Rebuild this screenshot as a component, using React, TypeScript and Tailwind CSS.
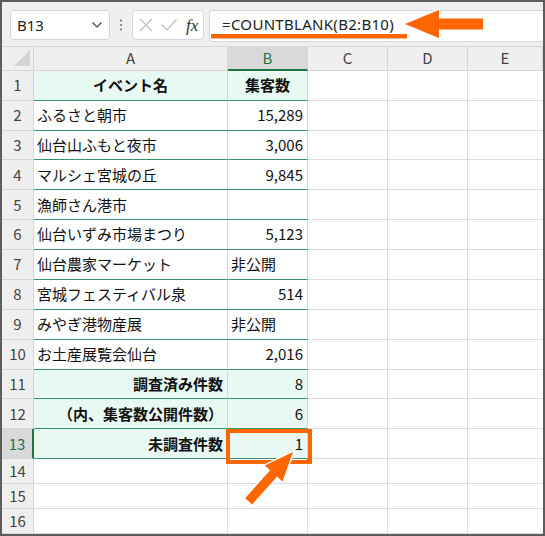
import React from 'react';

// ── Sheet data ────────────────────────────────────────────────────────────────
type Row = {
  n: number;
  a: string;
  b: string;
  kind?: 'head' | 'sum';
  bLeft?: boolean;
};

const ROWS: Row[] = [
  { n: 1, a: 'イベント名', b: '集客数', kind: 'head' },
  { n: 2, a: 'ふるさと朝市', b: '15,289' },
  { n: 3, a: '仙台山ふもと夜市', b: '3,006' },
  { n: 4, a: 'マルシェ宮城の丘', b: '9,845' },
  { n: 5, a: '漁師さん港市', b: '' },
  { n: 6, a: '仙台いずみ市場まつり', b: '5,123' },
  { n: 7, a: '仙台農家マーケット', b: '非公開', bLeft: true },
  { n: 8, a: '宮城フェスティバル泉', b: '514' },
  { n: 9, a: 'みやぎ港物産展', b: '非公開', bLeft: true },
  { n: 10, a: 'お土産展覧会仙台', b: '2,016' },
  { n: 11, a: '調査済み件数', b: '8', kind: 'sum' },
  { n: 12, a: '（内、集客数公開件数）', b: '6', kind: 'sum' },
  { n: 13, a: '未調査件数', b: '1', kind: 'sum' },
];

const FONT = { fontFamily: '"Noto Sans CJK JP", "Noto Sans", sans-serif' };
const UI_FONT = { fontFamily: '"Noto Sans", "Liberation Sans", sans-serif' };

// ── Toolbar ──────────────────────────────────────────────────────────────────
function Toolbar() {
  return (
    <div className="flex h-[44px] items-start bg-[#efefef] pl-[8px] pt-[8px]">
      <div
        className="flex h-[30px] w-[100px] items-center justify-between rounded-[4px] border border-[#d6d6d6] bg-white pl-[6px] pr-[7px] text-[15px] text-[#222]"
        style={UI_FONT}
      >
        <span>B13</span>
        <svg width="10" height="6" viewBox="0 0 10 6">
          <polyline points="0.5,0.5 5,5 9.5,0.5" fill="none" stroke="#444" strokeWidth="1.2" />
        </svg>
      </div>
      <div className="flex h-[30px] w-[22px] items-center justify-center">
        <svg width="4" height="12" viewBox="0 0 4 12">
          <circle cx="2" cy="1.5" r="1.1" fill="#777" />
          <circle cx="2" cy="6" r="1.1" fill="#777" />
          <circle cx="2" cy="10.5" r="1.1" fill="#777" />
        </svg>
      </div>
      <div className="flex h-[30px] w-[72px] items-center rounded-[4px] border border-[#d6d6d6] bg-white pl-[6px]">
        <svg width="14" height="14" viewBox="0 0 14 14">
          <path d="M1 1 L13 13 M13 1 L1 13" stroke="#bdbdbd" strokeWidth="1.2" />
        </svg>
        <svg width="16" height="12" viewBox="0 0 16 12" className="ml-[8px]">
          <polyline points="0.5,5.5 6,11 15.5,0.5" fill="none" stroke="#bdbdbd" strokeWidth="1.2" />
        </svg>
        <span
          className="ml-[9px] text-[17px] italic leading-none text-[#333]"
          style={{ fontFamily: '"Liberation Serif", "DejaVu Serif", serif' }}
        >
          fx
        </span>
      </div>
      <div
        className="ml-[5px] flex h-[32px] flex-1 items-start rounded-l-[4px] border-y border-l border-[#d6d6d6] bg-white pl-[12px] pt-[2px] text-[15px] tracking-[0.3px] text-[#222]"
        style={UI_FONT}
      >
        =COUNTBLANK(B2:B10)
      </div>
    </div>
  );
}

// ── Column header ────────────────────────────────────────────────────────────
function ColumnHeader() {
  const cols = [
    { l: 'A', w: 'w-[194px]' },
    { l: 'B', w: 'w-[80px]', sel: true },
    { l: 'C', w: 'w-[80px]' },
    { l: 'D', w: 'w-[80px]' },
    { l: 'E', w: 'flex-1' },
  ];
  return (
    <div className="flex h-[25px] border-t border-[#d6d6d6]" style={FONT}>
      <div className="relative w-[32px] border-r border-b border-[#d6d6d6] bg-[#efefef]">
        <div className="absolute bottom-[4px] right-[3px] h-0 w-0 border-b-[16px] border-l-[16px] border-b-[#d4d4d4] border-l-transparent" />
      </div>
      {cols.map(c => (
        <div
          key={c.l}
          className={
            c.sel
              ? `${c.w} flex items-center justify-center border-r border-b-2 border-r-[#d6d6d6] border-b-[#217346] bg-[#d9d9d9] text-[15px] text-[#217346]`
              : `${c.w} flex items-center justify-center border-r border-b border-[#d6d6d6] bg-[#efefef] text-[15px] text-[#444]`
          }
        >
          {c.l}
        </div>
      ))}
    </div>
  );
}

// ── Body rows ────────────────────────────────────────────────────────────────
function SheetRow({ row }: { row: Row }) {
  const mint = row.kind ? 'bg-[#e8f8f2]' : 'bg-white';
  const bold = row.kind ? 'font-bold' : '';
  const sel = row.n === 13;
  const aAlign =
    row.kind === 'head' ? 'justify-center' : row.kind === 'sum' ? 'justify-end pr-[4px]' : 'justify-start pl-[3px]';
  const bAlign =
    row.kind === 'head' ? 'justify-center' : row.bLeft ? 'justify-start pl-[3px]' : 'justify-end pr-[4px]';

  return (
    <div className="flex h-[30px] text-[15px] text-[#111]" style={FONT}>
      <div
        className={
          sel
            ? 'flex w-[32px] items-center justify-center border-r-2 border-b border-r-[#217346] border-b-[#d6d6d6] bg-[#d9d9d9] text-[#217346]'
            : 'flex w-[32px] items-center justify-center border-r border-b border-[#d6d6d6] bg-[#efefef] text-[#444]'
        }
      >
        {row.n}
      </div>
      <div className={`flex w-[194px] items-center border-r border-b border-r-[#d6d6d6] border-b-[#35936f] ${mint} ${bold} ${aAlign}`}>
        {row.a}
      </div>
      <div className={`flex w-[80px] items-center border-r border-b border-r-[#d6d6d6] border-b-[#35936f] ${mint} ${row.kind === 'head' ? 'font-bold' : ''} ${bAlign}`}>
        {row.b}
      </div>
      <div className="w-[80px] border-r border-b border-[#dcdcdc] bg-white" />
      <div className="w-[80px] border-r border-b border-[#dcdcdc] bg-white" />
      <div className="flex-1 border-b border-[#dcdcdc] bg-white" />
    </div>
  );
}

function EmptyRow({ n }: { n: number }) {
  return (
    <div className="flex h-[25px] text-[15px]" style={FONT}>
      <div className="flex w-[32px] items-center justify-center border-r border-b border-[#d6d6d6] bg-[#efefef] text-[#444]">
        {n}
      </div>
      <div className="w-[194px] border-r border-b border-[#dcdcdc] bg-white" />
      <div className="w-[80px] border-r border-b border-[#dcdcdc] bg-white" />
      <div className="w-[80px] border-r border-b border-[#dcdcdc] bg-white" />
      <div className="w-[80px] border-r border-b border-[#dcdcdc] bg-white" />
      <div className="flex-1 border-b border-[#dcdcdc] bg-white" />
    </div>
  );
}

// ── Callout arrows ───────────────────────────────────────────────────────────
const ARROW = '0,0 34,-14 34,-5.5 78,-5.5 78,5.5 34,5.5 34,14';

function Callouts() {
  return (
    <svg className="pointer-events-none absolute left-0 top-0" width="545" height="536" viewBox="0 0 545 536">
      <rect x="211" y="34" width="196" height="4.5" fill="#ff6600" />
      <polygon
        points={ARROW}
        transform="translate(405 24)"
        fill="#ff6600"
        stroke="#fff"
        strokeWidth="3"
        strokeLinejoin="round"
        paintOrder="stroke"
      />
      <rect x="307" y="459" width="4" height="5" fill="#217346" />
      <rect x="228" y="431" width="82" height="31" fill="none" stroke="#ff6600" strokeWidth="4" />
      <polygon
        points={ARROW}
        transform="translate(293 452) rotate(132) scale(0.85)"
        fill="#ff6600"
        stroke="#fff"
        strokeWidth="3.5"
        strokeLinejoin="round"
        paintOrder="stroke"
      />
    </svg>
  );
}

export default function App() {
  return (
    <div className="relative h-[536px] w-[545px] overflow-hidden">
      <div className="flex h-full flex-col overflow-hidden border-2 border-[#5c5c5c] bg-white">
        <Toolbar />
        <ColumnHeader />
        {ROWS.map(r => (
          <SheetRow key={r.n} row={r} />
        ))}
        {[14, 15, 16].map(n => (
          <EmptyRow key={n} n={n} />
        ))}
      </div>
      <Callouts />
    </div>
  );
}
